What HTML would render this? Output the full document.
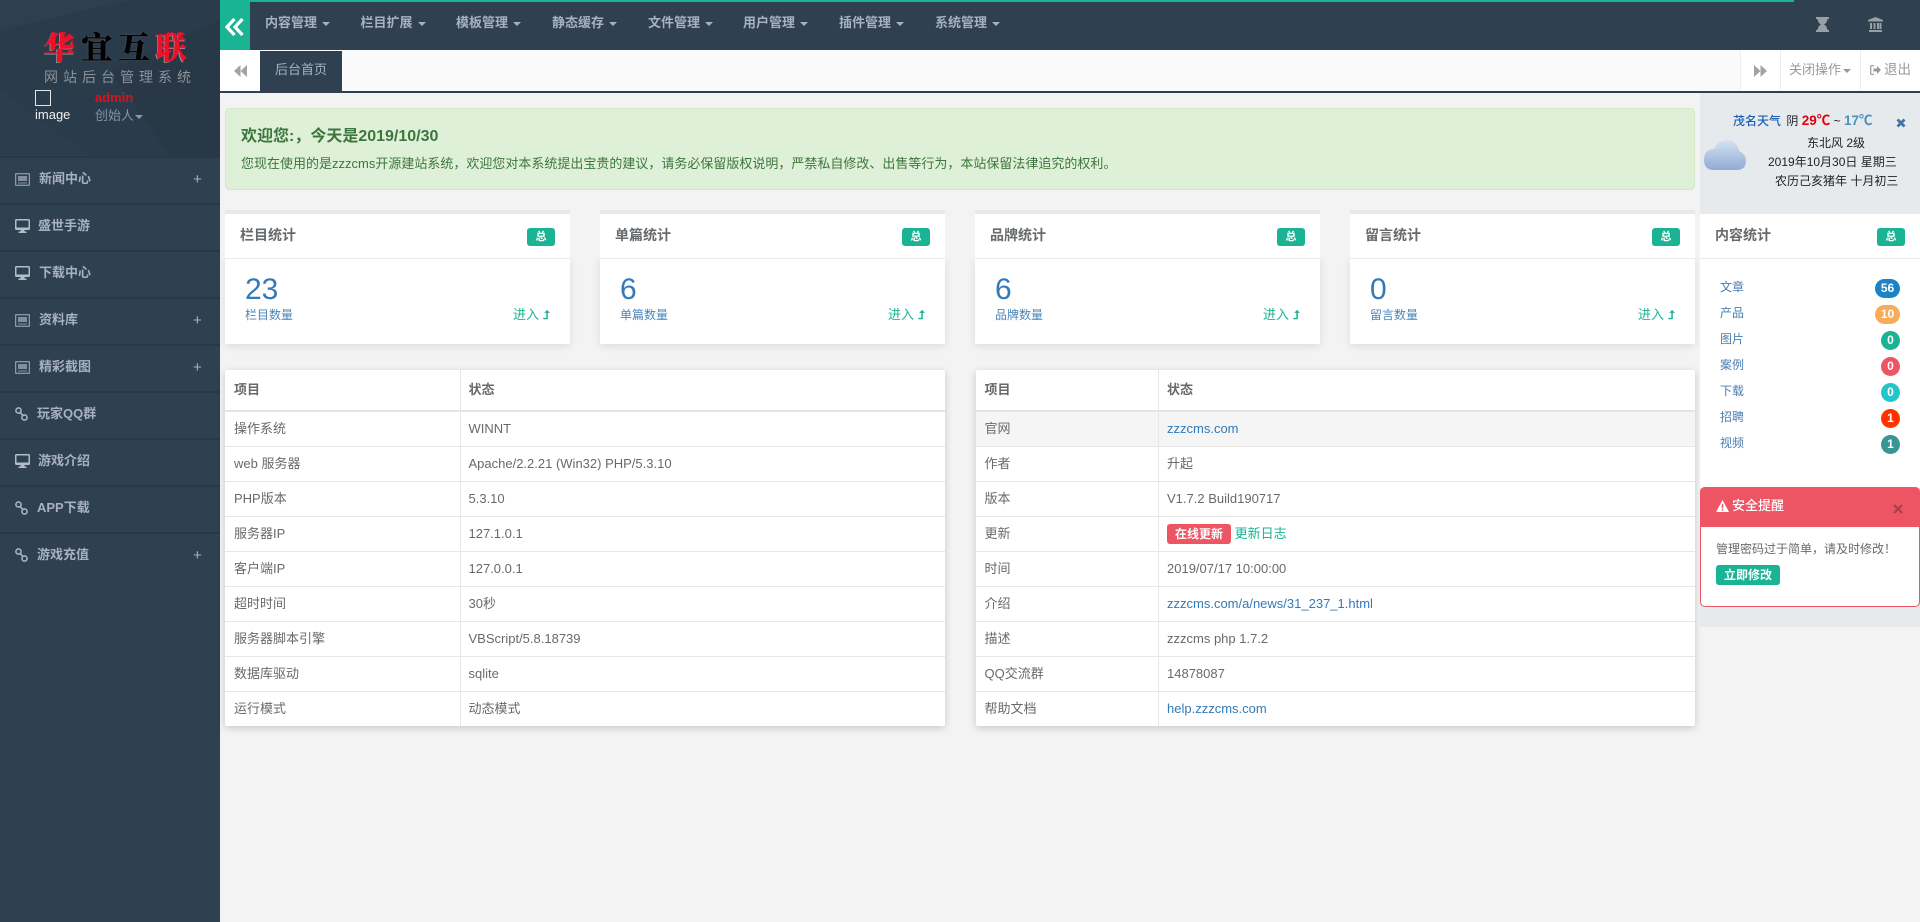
<!DOCTYPE html>
<html lang="zh-CN"><head><meta charset="utf-8"><title>后台管理</title>
<style>
*{box-sizing:border-box}
html,body{margin:0;padding:0;width:1920px;height:922px;overflow:hidden;background:#f3f3f4;color:#676a6c;font:13px/20px "Liberation Sans","Noto Sans CJK SC",sans-serif}
.a,.t{position:absolute}
.t{white-space:nowrap}
a{color:#337ab7;text-decoration:none}
#side{left:0;top:0;width:220px;height:922px;background:#2f4050}
#shead{left:0;top:0;width:220px;height:156px;background:#2a3b4b;overflow:hidden}
.line{left:0;width:220px;height:2px;background:#293846}
.mi{left:0;width:220px;height:20px;color:#a7b1c2;font-weight:600}
.plus{color:#a7b1c2;font-size:15px;font-weight:400;left:193px}
.nav{top:13px;color:#a7b1c2;font-weight:600}
.caret{display:inline-block;width:0;height:0;border-left:4px solid transparent;border-right:4px solid transparent;border-top:4px solid currentColor;vertical-align:middle;margin-left:5px}
.cardh{top:210px;height:48px;background:#fff;border-top:4px solid #e7eaec}
.cardb{top:258px;height:86px;background:#fff;border-top:1px solid #e7eaec;box-shadow:0 2px 8px rgba(0,0,0,.1)}
.ct{font-size:14px;font-weight:700;color:#676a6c}
.lb{width:28px;height:18px;background:#1ab394;border-radius:3px;color:#fff;font-size:11px;font-weight:700;line-height:18px;text-align:center}
.num{font-size:30px;line-height:34px;color:#337ab7}
.sub{font-size:12px;color:#4a86ba}
.go{color:#1ab394}
table{position:absolute;top:370px;border-collapse:collapse;table-layout:fixed;background:#fff;box-shadow:0 2px 8px rgba(0,0,0,.18);border-radius:2px}
th,td{border:1px solid #e7e7e7;border-width:0 0 1px 1px;padding:0 8px;text-align:left;height:35px;vertical-align:middle;line-height:18px;font-weight:400}
th{height:41px;border-bottom:2px solid #e4e4e4;font-weight:700}
tr:last-child td{border-bottom:0}
th:first-child,td:first-child{border-left:0;padding-left:9px}
.lst{left:1720px;font-size:12px;color:#4a7eb0}
.bd{height:19px;border-radius:10px;color:#fff;font-weight:700;font-size:12px;line-height:19px;text-align:center}
</style></head><body>

<div class="a" id="side">
<div class="a" id="shead">
<svg class="a" style="left:0;top:0" width="220" height="156"><polygon points="0,0 130,0 0,30" fill="#2d3f50"/><polygon points="110,70 220,20 220,156 170,156" fill="#283847"/><polygon points="0,90 90,156 0,156" fill="#2c3d4d"/></svg>
<div class="t" style="left:44px;top:28px;font:900 31px/36px 'Noto Serif CJK SC',serif;letter-spacing:6.300px;color:#ee1028;-webkit-text-stroke:.5px #ee1028;text-shadow:-1px 1px 0 #999">华<span style="color:#000;-webkit-text-stroke:.5px #000;text-shadow:0 0 1px #ddd">宜互</span>联</div>
<div class="t" style="left:44px;top:67px;font-size:14px;letter-spacing:5px;color:#8c9298">网站后台管理系统</div>
<div class="a" style="left:35px;top:90px;width:16px;height:16px;border:1px solid #e6e6e6"></div>
<div class="t" style="left:35px;top:105px;color:#eee">image</div>
<div class="t" style="left:95px;top:88px;color:#e0101b;font-weight:700">admin</div>
<div class="t" style="left:95px;top:106px;color:#7f94a9">创始人<span class="caret" style="margin-left:1px;color:#8a9aaa"></span></div>
</div>
<div class="a line" style="top:156px"></div><div class="a line" style="top:203px"></div><div class="a line" style="top:250px"></div><div class="a line" style="top:297px"></div><div class="a line" style="top:344px"></div><div class="a line" style="top:391px"></div><div class="a line" style="top:438px"></div><div class="a line" style="top:485px"></div><div class="a line" style="top:532px"></div>

<svg class="a" style="left:15px;top:173px" width="15" height="13"><path d="M.7.7h13.6v11.6H.7z" fill="none" stroke="#a7b1c2"/><path d="M3 3h9v5H3zM3 9.5h9v1H3z" fill="#a7b1c2" fill-opacity=".7"/></svg>
<div class="t mi" style="left:39px;top:169px">新闻中心</div><div class="t plus" style="top:170px">+</div>
<svg class="a" style="left:15px;top:219px" width="15" height="14"><path d="M0 1.5Q0 0 1.5 0h12Q15 0 15 1.5v8Q15 11 13.500 11H9.500v1.500h2V14h-8v-1.500h2V11h-4Q0 11 0 9.500zM1.500 1.500v7h12v-7z" fill="#b3bccb"/></svg>
<div class="t mi" style="left:38px;top:216px">盛世手游</div>
<svg class="a" style="left:15px;top:266px" width="15" height="14"><path d="M0 1.5Q0 0 1.5 0h12Q15 0 15 1.5v8Q15 11 13.500 11H9.500v1.500h2V14h-8v-1.500h2V11h-4Q0 11 0 9.500zM1.500 1.500v7h12v-7z" fill="#b3bccb"/></svg>
<div class="t mi" style="left:39px;top:263px">下载中心</div>
<svg class="a" style="left:15px;top:314px" width="15" height="13"><path d="M.7.7h13.6v11.6H.7z" fill="none" stroke="#a7b1c2"/><path d="M3 3h9v5H3zM3 9.5h9v1H3z" fill="#a7b1c2" fill-opacity=".7"/></svg>
<div class="t mi" style="left:39px;top:310px">资料库</div><div class="t plus" style="top:311px">+</div>
<svg class="a" style="left:15px;top:361px" width="15" height="13"><path d="M.7.7h13.6v11.6H.7z" fill="none" stroke="#a7b1c2"/><path d="M3 3h9v5H3zM3 9.5h9v1H3z" fill="#a7b1c2" fill-opacity=".7"/></svg>
<div class="t mi" style="left:39px;top:357px">精彩截图</div><div class="t plus" style="top:358px">+</div>
<svg class="a" style="left:15px;top:407px" width="13" height="14"><circle cx="3.500" cy="3.500" r="2.600" fill="none" stroke="#a7b1c2" stroke-width="1.600"/><circle cx="9.500" cy="10.500" r="2.600" fill="none" stroke="#a7b1c2" stroke-width="1.600"/><path d="M4.500 5l4 4" stroke="#a7b1c2" stroke-width="1.600"/></svg>
<div class="t mi" style="left:37px;top:404px">玩家QQ群</div>
<svg class="a" style="left:15px;top:454px" width="15" height="14"><path d="M0 1.5Q0 0 1.5 0h12Q15 0 15 1.5v8Q15 11 13.500 11H9.500v1.500h2V14h-8v-1.500h2V11h-4Q0 11 0 9.500zM1.500 1.500v7h12v-7z" fill="#b3bccb"/></svg>
<div class="t mi" style="left:38px;top:451px">游戏介绍</div>
<svg class="a" style="left:15px;top:501px" width="13" height="14"><circle cx="3.500" cy="3.500" r="2.600" fill="none" stroke="#a7b1c2" stroke-width="1.600"/><circle cx="9.500" cy="10.500" r="2.600" fill="none" stroke="#a7b1c2" stroke-width="1.600"/><path d="M4.500 5l4 4" stroke="#a7b1c2" stroke-width="1.600"/></svg>
<div class="t mi" style="left:37px;top:498px">APP下载</div>
<svg class="a" style="left:15px;top:548px" width="13" height="14"><circle cx="3.500" cy="3.500" r="2.600" fill="none" stroke="#a7b1c2" stroke-width="1.600"/><circle cx="9.500" cy="10.500" r="2.600" fill="none" stroke="#a7b1c2" stroke-width="1.600"/><path d="M4.500 5l4 4" stroke="#a7b1c2" stroke-width="1.600"/></svg>
<div class="t mi" style="left:37px;top:545px">游戏充值</div><div class="t plus" style="top:546px">+</div>
</div>

<!-- top bar -->
<div class="a" style="left:220px;top:0;width:1700px;height:50px;background:#2f4050"></div>
<div class="a" style="left:220px;top:0;width:1574px;height:2px;background:#1ab394"></div>
<div class="a" style="left:220px;top:2px;width:30px;height:48px;background:#1ab394"></div>
<svg class="a" style="left:224px;top:17px" width="22" height="20"><path d="M10.500 2L3 10l7.500 8M18.500 2L11 10l7.500 8" fill="none" stroke="#fff" stroke-width="3.200"/></svg>
<div class="t nav" style="left:265px">内容管理<span class="caret"></span></div>
<div class="t nav" style="left:360.500px">栏目扩展<span class="caret"></span></div>
<div class="t nav" style="left:456px">模板管理<span class="caret"></span></div>
<div class="t nav" style="left:552px">静态缓存<span class="caret"></span></div>
<div class="t nav" style="left:648px">文件管理<span class="caret"></span></div>
<div class="t nav" style="left:743px">用户管理<span class="caret"></span></div>
<div class="t nav" style="left:839px">插件管理<span class="caret"></span></div>
<div class="t nav" style="left:935px">系统管理<span class="caret"></span></div>
<svg class="a" style="left:1816px;top:17px" width="13" height="15"><path d="M0 0h13v2h-1.500Q11 6 8 7.500 11 9 11.500 13H13v2H0v-2h1.500Q2 9 5 7.500 2 6 1.500 2H0z" fill="#98a0a6"/></svg>
<svg class="a" style="left:1868px;top:17px" width="15" height="15"><path d="M7.500 0L15 3v1.500H0V3zM1 13h13v2H1zM2 6h2v6H2zM5.500 6h2v6h-2zM9 6h2v6H9zM11.500 6h2v6h-2z" fill="#98a0a6"/></svg>

<!-- tab bar -->
<div class="a" style="left:220px;top:50px;width:1700px;height:41px;background:#fafafa"></div>
<div class="a" style="left:220px;top:91px;width:1700px;height:2px;background:#2f4050"></div>
<div class="a" style="left:220px;top:50px;width:40px;height:41px;background:#fff"></div>
<svg class="a" style="left:234px;top:65px" width="13" height="12"><path d="M6.500 0v12L0 6zM13 0v12L6.500 6z" fill="#a0a4a8"/></svg>
<div class="a" style="left:260px;top:51px;width:82px;height:40px;background:#2f4050;color:#a7b1c2;text-align:center;line-height:38px">后台首页</div>
<div class="a" style="left:1740px;top:50px;width:180px;height:41px;background:#fff"></div>
<div class="a" style="left:1740px;top:50px;width:1px;height:41px;background:#eee"></div>
<div class="a" style="left:1780px;top:50px;width:1px;height:41px;background:#eee"></div>
<div class="a" style="left:1860px;top:50px;width:1px;height:41px;background:#eee"></div>
<svg class="a" style="left:1754px;top:65px" width="13" height="12"><path d="M0 0v12L6.500 6zM6.500 0v12L13 6z" fill="#a0a4a8"/></svg>
<div class="t" style="left:1789px;top:60px;color:#999">关闭操作<span class="caret" style="margin-left:2px"></span></div>
<svg class="a" style="left:1870px;top:65px" width="11" height="10"><path d="M4 .7H1.500Q.7.700.7 1.500v7q0 .8.800.8H4" fill="none" stroke="#999" stroke-width="1.200"/><path d="M3.500 3.500h3.500V1L11 5 7 9V6.500H3.500z" fill="#999"/></svg>
<div class="t" style="left:1884px;top:60px;color:#999;font-size:13.500px">退出</div>

<!-- welcome -->
<div class="a" style="left:225px;top:108px;width:1470px;height:82px;background:#dff0d8;border:1px solid #d6e9c6;border-radius:4px"></div>
<div class="t" style="left:241px;top:127px;font-size:16px;font-weight:700;color:#3c763d">欢迎您:&#65292;今天是2019/10/30</div>
<div class="t" style="left:241px;top:154px;color:#3c763d">您现在使用的是zzzcms开源建站系统&#65292;欢迎您对本系统提出宝贵的建议&#65292;请务必保留版权说明&#65292;严禁私自修改、出售等行为&#65292;本站保留法律追究的权利。</div>

<!-- cards -->
<div class="a cardb" style="left:225px;width:345px"></div><div class="a cardh" style="left:225px;width:345px"></div>
<div class="t ct" style="left:240px;top:225px">栏目统计</div><div class="a lb" style="left:527px;top:228px">总</div>
<div class="t num" style="left:245px;top:273px">23</div><div class="t sub" style="left:245px;top:305px">栏目数量</div>
<div class="t go" style="left:513px;top:305px">进入 <b style="font-size:12px">⮥</b></div>

<div class="a cardb" style="left:600px;width:345px"></div><div class="a cardh" style="left:600px;width:345px"></div>
<div class="t ct" style="left:615px;top:225px">单篇统计</div><div class="a lb" style="left:902px;top:228px">总</div>
<div class="t num" style="left:620px;top:273px">6</div><div class="t sub" style="left:620px;top:305px">单篇数量</div>
<div class="t go" style="left:888px;top:305px">进入 <b style="font-size:12px">⮥</b></div>

<div class="a cardb" style="left:975px;width:345px"></div><div class="a cardh" style="left:975px;width:345px"></div>
<div class="t ct" style="left:990px;top:225px">品牌统计</div><div class="a lb" style="left:1277px;top:228px">总</div>
<div class="t num" style="left:995px;top:273px">6</div><div class="t sub" style="left:995px;top:305px">品牌数量</div>
<div class="t go" style="left:1263px;top:305px">进入 <b style="font-size:12px">⮥</b></div>

<div class="a cardb" style="left:1350px;width:345px"></div><div class="a cardh" style="left:1350px;width:345px"></div>
<div class="t ct" style="left:1365px;top:225px">留言统计</div><div class="a lb" style="left:1652px;top:228px">总</div>
<div class="t num" style="left:1370px;top:273px">0</div><div class="t sub" style="left:1370px;top:305px">留言数量</div>
<div class="t go" style="left:1638px;top:305px">进入 <b style="font-size:12px">⮥</b></div>

<!-- tables -->
<table style="left:225px;width:720px"><col style="width:235px"><col>
<tr><th>项目</th><th>状态</th></tr>
<tr><td>操作系统</td><td>WINNT</td></tr>
<tr><td>web 服务器</td><td>Apache/2.2.21 (Win32) PHP/5.3.10</td></tr>
<tr><td>PHP版本</td><td>5.3.10</td></tr>
<tr><td>服务器IP</td><td>127.1.0.1</td></tr>
<tr><td>客户端IP</td><td>127.0.0.1</td></tr>
<tr><td>超时时间</td><td>30秒</td></tr>
<tr><td>服务器脚本引擎</td><td>VBScript/5.8.18739</td></tr>
<tr><td>数据库驱动</td><td>sqlite</td></tr>
<tr><td>运行模式</td><td>动态模式</td></tr>
</table>
<table style="left:975.500px;width:719px"><col style="width:183px"><col>
<tr><th>项目</th><th>状态</th></tr>
<tr style="background:#f5f5f5"><td>官网</td><td><a href="#">zzzcms.com</a></td></tr>
<tr><td>作者</td><td>升起</td></tr>
<tr><td>版本</td><td>V1.7.2 Build190717</td></tr>
<tr><td>更新</td><td><span style="display:inline-block;width:64px;height:20px;background:#ed5565;color:#fff;border-radius:3px;font-size:12px;font-weight:700;line-height:20px;text-align:center;vertical-align:middle">在线更新</span> <a href="#" style="color:#1ab394;vertical-align:middle">更新日志</a></td></tr>
<tr><td>时间</td><td>2019/07/17 10:00:00</td></tr>
<tr><td>介绍</td><td><a href="#">zzzcms.com/a/news/31_237_1.html</a></td></tr>
<tr><td>描述</td><td>zzzcms php 1.7.2</td></tr>
<tr><td>QQ交流群</td><td>14878087</td></tr>
<tr><td>帮助文档</td><td><a href="#">help.zzzcms.com</a></td></tr>
</table>

<!-- right panel -->
<div class="a" style="left:1700px;top:93px;width:220px;height:534px;background:#e7eaec"></div>
<div class="t" style="left:1733px;top:111px;font-size:12px;color:#222"><span style="color:#1a5fb4;font-weight:500">茂名天气</span> <span style="margin-left:2px">阴</span> <b style="color:#e3000f;font-size:13.500px">29℃</b> ~ <b style="color:#4a90c0;font-size:13.500px">17℃</b></div>
<svg class="a" style="left:1896px;top:118px" width="10" height="10"><path d="M1.500 1.500l7 7M8.500 1.500l-7 7" stroke="#4573a8" stroke-width="2.800"/></svg>
<svg class="a" style="left:1704px;top:140px" width="42" height="30"><defs><linearGradient id="cl" x1="0" y1="0" x2="0" y2="1"><stop offset="0" stop-color="#d5e2f2"/><stop offset="1" stop-color="#8fabd4"/></linearGradient></defs><path d="M10 30Q0 30 0 20 0 9 10 9 14 0 24 0 33 1 35 11 42 14 42 21 42 30 32 30z" fill="url(#cl)"/></svg>
<div class="t" style="left:1807px;top:133px;font-size:12px;color:#222">东北风 2级</div>
<div class="t" style="left:1768px;top:152px;font-size:12px;color:#222">2019年10月30日 星期三</div>
<div class="t" style="left:1775px;top:171px;font-size:12px;color:#222">农历己亥猪年 十月初三</div>

<div class="a" style="left:1700px;top:214px;width:220px;height:44px;background:#fff"></div>
<div class="a" style="left:1700px;top:258px;width:220px;height:230px;background:#fff;border-top:1px solid #e7eaec"></div>
<div class="t ct" style="left:1715px;top:225px">内容统计</div><div class="a lb" style="left:1877px;top:228px">总</div>
<div class="t lst" style="top:277px">文章</div><div class="a bd" style="left:1875px;top:279px;width:25px;background:#1c84c6">56</div>
<div class="t lst" style="top:303px">产品</div><div class="a bd" style="left:1875px;top:305px;width:25px;background:#f8ac59">10</div>
<div class="t lst" style="top:329px">图片</div><div class="a bd" style="left:1881px;top:331px;width:19px;background:#1ab394">0</div>
<div class="t lst" style="top:355px">案例</div><div class="a bd" style="left:1881px;top:357px;width:19px;background:#ed5565">0</div>
<div class="t lst" style="top:381px">下载</div><div class="a bd" style="left:1881px;top:383px;width:19px;background:#23c6c8">0</div>
<div class="t lst" style="top:407px">招聘</div><div class="a bd" style="left:1881px;top:409px;width:19px;background:#ff3300">1</div>
<div class="t lst" style="top:433px">视频</div><div class="a bd" style="left:1881px;top:435px;width:19px;background:#3a9494">1</div>

<div class="a" style="left:1700px;top:487px;width:220px;height:120px;background:#fff;border:1px solid #ed5565;border-radius:5px"></div>
<div class="a" style="left:1700px;top:487px;width:220px;height:40px;background:#ed5565;border-radius:5px 5px 0 0"></div>
<svg class="a" style="left:1716px;top:500px" width="13" height="12"><path d="M6.500 0L13 12H0z" fill="#fff"/><path d="M5.800 4h1.400v4.500H5.800zM5.800 9.300h1.400v1.400H5.800z" fill="#ed5565"/></svg>
<div class="t" style="left:1732px;top:496px;color:#fff;font-weight:500">安全提醒</div>
<svg class="a" style="left:1893px;top:504px" width="10" height="10"><path d="M1 1l8 8M9 1L1 9" stroke="#a8404c" stroke-width="2.200"/></svg>
<div class="t" style="left:1716px;top:539px;font-size:12px">管理密码过于简单&#65292;请及时修改&#65281;</div>
<div class="a" style="left:1716px;top:565px;width:64px;height:20px;background:#1ab394;border-radius:3px;color:#fff;font-size:12px;font-weight:700;line-height:20px;text-align:center">立即修改</div>
</body></html>
